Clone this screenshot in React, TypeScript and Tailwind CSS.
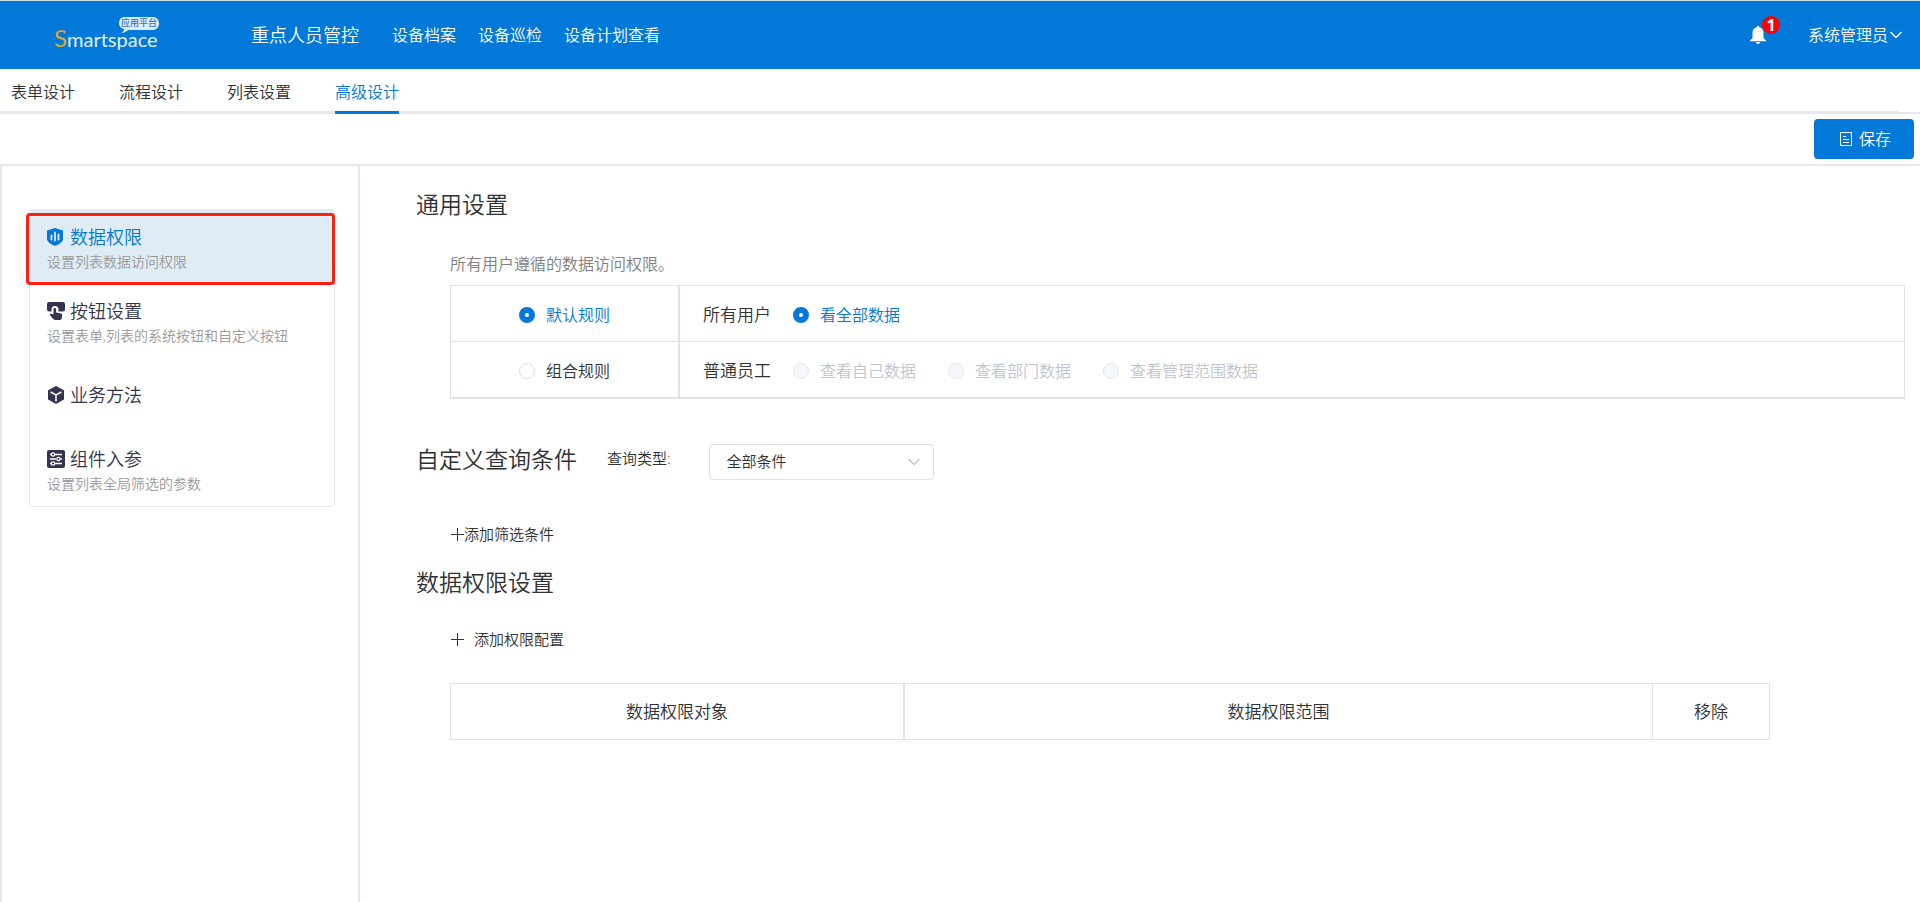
import { useState } from "react"

const topMenus = ["设备档案", "设备巡检", "设备计划查看"]

const tabs = ["表单设计", "流程设计", "列表设置", "高级设计"]

const sideItems = [
  { key: "auth", label: "数据权限", desc: "设置列表数据访问权限", icon: ShieldIcon },
  { key: "button", label: "按钮设置", desc: "设置表单,列表的系统按钮和自定义按钮", icon: TapIcon },
  { key: "method", label: "业务方法", desc: "", icon: CubeIcon },
  { key: "params", label: "组件入参", desc: "设置列表全局筛选的参数", icon: SlidersIcon },
]

const staffScopes = ["查看自己数据", "查看部门数据", "查看管理范围数据"]

function Logo() {
  return (
    <svg width="108" height="42" viewBox="0 0 108 42" role="img" aria-label="Smartspace 应用平台">
      <path
        d="M71 3h29a6 6 0 0 1 6 6v1a6 6 0 0 1-6 6H75c-2 2-4 3-7 3 2-1 3-2 3-4a6 6 0 0 1-5-6 6 6 0 0 1 5-6z"
        fill="#dcebfa"
      />
      <text x="68" y="12" fontSize="9" fontWeight="500" fill="#3f74b8" fontFamily="'Noto Sans CJK SC', sans-serif">
        应用平台
      </text>
      <text x="1" y="33" fontSize="24" fontWeight="400" fontFamily="Lato, sans-serif" fill="#e0a526">
        S
      </text>
      <text x="14" y="33" fontSize="20" fontWeight="400" fontFamily="Lato, sans-serif" fill="#e3effb">
        martspace
      </text>
    </svg>
  )
}

function ShieldIcon() {
  return (
    <svg width="18" height="18" viewBox="0 0 18 18" aria-hidden="true">
      <path d="M8 0l8 2.6v8.2c0 3.4-4 5.6-8 7.2-4-1.600-8-3.800-8-7.200V2.600z" fill="#0278d9" />
      <path d="M4.500 7.500v4M8 4.500v8M11.500 6.500v5" stroke="#dfecf6" strokeWidth="1.800" strokeLinecap="round" />
    </svg>
  )
}

function TapIcon() {
  return (
    <svg width="18" height="18" viewBox="0 0 18 18" aria-hidden="true">
      <path
        d="M2 0h14a2 2 0 0 1 2 2v5.500a2 2 0 0 1-2 2h-4.500V7.500a3.500 3.500 0 0 0-7 0v2H2.500A2.500 2.500 0 0 1 0 7V2a2 2 0 0 1 2-2z"
        fill="#34344e"
      />
      <path
        d="M6.500 7.200a1.300 1.300 0 0 1 2.600 0v3.300l4.900 1a1.500 1.500 0 0 1 1.200 1.600L14.700 16.500a2 2 0 0 1-2 1.500H8.500a3 3 0 0 1-2.200-1L3 13.200c-.5-.8.3-1.800 1.300-1.500l2.200.8z"
        fill="#34344e"
      />
    </svg>
  )
}

function CubeIcon() {
  return (
    <svg width="18" height="18" viewBox="0 0 18 18" aria-hidden="true">
      <path d="M9 0l8 4.300v9.200L9 18l-8-4.500V4.300z" fill="#34344e" />
      <path d="M3.500 6L9 9l5.500-3M9 9v6.500" fill="none" stroke="#fff" strokeWidth="1.500" />
    </svg>
  )
}

function SlidersIcon() {
  return (
    <svg width="18" height="18" viewBox="0 0 18 18" aria-hidden="true">
      <rect width="18" height="18" rx="2" fill="#34344e" />
      <path d="M3 4.500h1M8 4.500h7M3 9h6M13.500 9H15M3 13.500h1M8 13.500h7" stroke="#fff" strokeWidth="1.300" />
      <circle cx="6" cy="4.500" r="1.700" fill="none" stroke="#fff" strokeWidth="1.200" />
      <circle cx="11.500" cy="9" r="1.700" fill="none" stroke="#fff" strokeWidth="1.200" />
      <circle cx="6" cy="13.500" r="1.700" fill="none" stroke="#fff" strokeWidth="1.200" />
    </svg>
  )
}

function BellIcon() {
  return (
    <svg width="16" height="18" viewBox="0 0 16 18" aria-hidden="true">
      <path
        d="M8 0c.9 0 1.300.5 1.300 1.300C12 1.900 13.500 4 13.500 6.800V12l2.500 2.500v.8H0v-.8L2.500 12V6.800C2.500 4 4 1.900 6.700 1.300 6.700.5 7.100 0 8 0zM6 16h4c0 1.200-.8 2-2 2s-2-.8-2-2z"
        fill="#fff"
      />
    </svg>
  )
}

function ChevronIcon() {
  return (
    <svg width="12" height="8" viewBox="0 0 12 8" fill="none" stroke="currentColor" strokeWidth="1.300" aria-hidden="true">
      <path d="M.5 1L6 6.500 11.500 1" />
    </svg>
  )
}

function PlusIcon() {
  return (
    <svg width="13" height="13" viewBox="0 0 13 13" stroke="currentColor" aria-hidden="true">
      <path d="M6.500 0v13M0 6.500h13" />
    </svg>
  )
}

type RadioProps = {
  name: string
  label: string
  checked?: boolean
  disabled?: boolean
  onChange?: () => void
}

function Radio({ name, label, checked = false, disabled = false, onChange }: RadioProps) {
  return (
    <label
      className={`flex items-center gap-[11px] text-base ${
        disabled ? "text-[#c0c4cc]" : checked ? "text-[#0278d9]" : "text-[#303133]"
      }`}
    >
      <input
        type="radio"
        name={name}
        checked={checked}
        disabled={disabled}
        onChange={onChange}
        className="size-4 appearance-none rounded-full border border-[#dcdfe6] bg-white checked:border-6 checked:border-[#0278d9] disabled:border-[#e4e7ed] disabled:bg-[#f5f7fa]"
      />
      {label}
    </label>
  )
}

export default function App() {
  const [activeTab, setActiveTab] = useState("高级设计")
  const [activeSide, setActiveSide] = useState("auth")
  const [rule, setRule] = useState("default")
  const [queryType, setQueryType] = useState("all")

  return (
    <div className="flex min-h-screen flex-col bg-white font-['Open_Sans','Noto_Sans_CJK_SC',sans-serif] font-[350] text-[#303133]">
      {/* 顶部导航 */}
      <header className="flex h-[69px] items-center border-t border-[#cfdbe3] bg-[#0278d9] pr-[18px] pl-[53px] text-white">
        <Logo />
        <a href="#home" className="ml-[90px] text-lg">重点人员管控</a>
        <nav className="ml-[33px] flex gap-[22px] text-base">
          {topMenus.map((item) => (
            <a key={item} href="#menu">{item}</a>
          ))}
        </nav>
        <button className="relative ml-auto" aria-label="消息">
          <BellIcon />
          <span className="absolute -top-[10px] left-3 flex size-[18px] items-center justify-center rounded-full bg-[#ff0000] font-['Open_Sans'] text-base font-bold">
            1
          </span>
        </button>
        <button className="ml-[42px] flex items-center gap-[2px] text-base">
          系统管理员
          <ChevronIcon />
        </button>
      </header>

      {/* 设计页签 */}
      <div className="border-b-2 border-[#e4e7ed]">
        <div className="mr-[22px] flex h-[43px] gap-11 border-b border-[#e4e7ed] pl-[11px]" role="tablist">
          {tabs.map((tab) => (
            <button
              key={tab}
              role="tab"
              aria-selected={activeTab === tab}
              onClick={() => setActiveTab(tab)}
              className={`h-[45px] border-b-3 pt-[3px] text-base ${
                activeTab === tab ? "border-[#0278d9] text-[#0278d9]" : "border-transparent"
              }`}
            >
              {tab}
            </button>
          ))}
        </div>
      </div>

      <div className="flex justify-end border-b-2 border-[#e4e7ed] px-[6px] py-[5px]">
        <button className="flex h-10 w-25 items-center justify-center gap-[6px] rounded bg-[#0278d9] pl-[2px] text-base text-white">
          <svg width="14" height="14" viewBox="0 0 14 14" fill="none" stroke="currentColor" aria-hidden="true">
            <path d="M1.500.5h11v13h-11zM4 4.500h3M4 7.500h6M4 10.500h6" />
          </svg>
          保存
        </button>
      </div>

      <div className="flex flex-1">
        {/* 左侧菜单 */}
        <aside className="w-[360px] shrink-0 border-x-2 border-[#e4e7ed] pt-[43px] pr-[23px] pl-[27px]">
          <ul className="rounded border border-[#e4e7ed]">
            {sideItems.map(({ key, label, desc, icon: Icon }) => {
              const active = activeSide === key
              return (
                <li key={key} className="relative">
                  <button
                    onClick={() => setActiveSide(key)}
                    className={`flex h-[74px] w-full flex-col justify-center pl-[17px] text-left ${
                      active ? "rounded-t-sm bg-[#dfebf5]" : ""
                    } ${desc ? "pt-[2px]" : ""}`}
                  >
                    <span
                      className={`flex items-center gap-[5px] text-lg leading-7 ${
                        active ? "text-[#0278d9]" : "text-[#34344e]"
                      }`}
                    >
                      <Icon />
                      {label}
                    </span>
                    {desc && <span className="text-sm leading-[22px] text-[#999]">{desc}</span>}
                  </button>
                  {active && (
                    <span className="pointer-events-none absolute top-[3px] -right-px -bottom-px -left-1 rounded-sm border-3 border-[#ff1f0f]" />
                  )}
                </li>
              )
            })}
          </ul>
        </aside>

        <main className="min-w-0 flex-1 pt-[22px] pr-[15px] pl-14">
          <h2 className="text-[23px] leading-8">通用设置</h2>
          <section className="pl-[34px]">
            <p className="mt-8 text-base leading-6 text-[#808080]">所有用户遵循的数据访问权限。</p>
            <table className="mt-[9px] w-full border-separate border-spacing-0 border-t border-r border-b-2 border-l border-[#dfe2e8]">
              <tbody>
                <tr>
                  <td className="h-14 w-[229px] border-r-2 border-b border-[#dfe2e8] pt-[3px]">
                    <div className="flex justify-center">
                      <Radio name="rule" label="默认规则" checked={rule === "default"} onChange={() => setRule("default")} />
                    </div>
                  </td>
                  <td className="border-b border-[#dfe2e8] pt-[3px] pl-[23px]">
                    <div className="flex items-center">
                      <span className="mr-[22px] text-[17px]">所有用户</span>
                      <Radio name="scope" label="看全部数据" checked={rule === "default"} onChange={() => setRule("default")} />
                    </div>
                  </td>
                </tr>
                <tr>
                  <td className="h-[55px] border-r-2 border-[#dfe2e8] pt-[3px]">
                    <div className="flex justify-center">
                      <Radio name="rule" label="组合规则" checked={rule === "group"} onChange={() => setRule("group")} />
                    </div>
                  </td>
                  <td className="pt-[3px] pl-[23px]">
                    <div className="flex items-center">
                      <span className="mr-[22px] text-[17px]">普通员工</span>
                      <div className="flex gap-8">
                        {staffScopes.map((item) => (
                          <Radio key={item} name="staff" label={item} disabled />
                        ))}
                      </div>
                    </div>
                  </td>
                </tr>
              </tbody>
            </table>
          </section>

          <div className="mt-[45px] flex h-9 items-center">
            <h2 className="pb-[6px] text-[23px] leading-8">自定义查询条件</h2>
            <label htmlFor="queryType" className="ml-[30px] pb-2 text-[15px]">查询类型:</label>
            <div className="relative ml-[38px]">
              <select
                id="queryType"
                value={queryType}
                onChange={(e) => setQueryType(e.target.value)}
                className="h-9 w-[225px] appearance-none rounded border border-[#dcdfe6] bg-white pb-[2px] pl-[17px] text-[15px]"
              >
                <option value="all">全部条件</option>
                <option value="any">任一条件</option>
              </select>
              <span className="pointer-events-none absolute top-[14px] right-[14px] text-[#c0c4cc]">
                <ChevronIcon />
              </span>
            </div>
          </div>
          <button className="mt-[42px] ml-[35px] flex items-center text-[15px] leading-6">
            <PlusIcon />
            添加筛选条件
          </button>

          <h2 className="mt-5 text-[23px] leading-8">数据权限设置</h2>
          <button className="mt-[29px] ml-[35px] flex items-center gap-[10px] text-[15px] leading-6">
            <PlusIcon />
            添加权限配置
          </button>
          <div className="mt-8 mr-[135px] ml-[34px]">
            <table className="w-full table-fixed border-separate border-spacing-0 border border-[#dfe2e8] text-[17px]">
              <thead>
                <tr>
                  <th className="h-[55px] w-[454px] border-r-2 border-[#dfe2e8] font-[350]">数据权限对象</th>
                  <th className="border-r border-[#dfe2e8] font-[350]">数据权限范围</th>
                  <th className="w-[116px] font-[350]">移除</th>
                </tr>
              </thead>
            </table>
          </div>
        </main>
      </div>
    </div>
  )
}
